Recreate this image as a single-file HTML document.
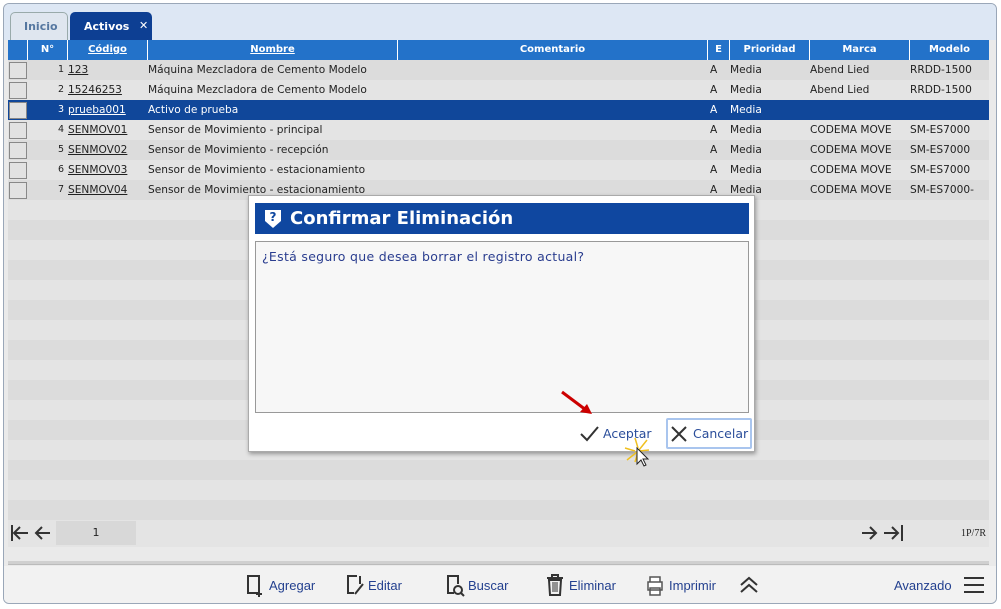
<!DOCTYPE html>
<html><head><meta charset="utf-8"><style>
*{box-sizing:border-box;margin:0;padding:0}
body{width:1001px;height:609px;background:#fff;font-family:"DejaVu Sans",Verdana,sans-serif;font-size:10.6px;color:#222;position:relative;overflow:hidden}
.panel{position:absolute;left:3px;top:3px;width:994px;height:601px;border:1px solid #9aa7b8;border-radius:6px;background:#eaeaea;overflow:hidden}
.tabbar{position:absolute;left:0;top:0;width:100%;height:36px;background:#dde7f4}
.tab{position:absolute;top:8px;height:28px;border:1px solid #9aa;border-bottom:none;border-radius:5px 5px 0 0;font-weight:bold;font-size:11px;padding:7px 0 0 13px}
.abs{position:absolute}
.hdr{position:absolute;left:4px;top:36px;width:981px;height:20px;background:#2372c9;color:#fff;font-weight:bold;font-size:10px}
.hdr div{position:absolute;top:0;height:20px;line-height:20px;text-align:center;border-left:1px solid #fff}
.row{position:absolute;left:4px;width:981px;height:20px;line-height:20px}
.row span{position:absolute;top:0;white-space:nowrap}
.cb{position:absolute;left:1px;top:2px;width:18px;height:17px;border:1px solid #888;background:#e2e2e2}
u{text-decoration:underline}
.dlg{position:absolute;left:248px;top:195px;width:507px;height:257px;background:#fff;border:1px solid #aaa;box-shadow:1px 2px 4px rgba(0,0,0,.35)}
.tb{font-family:"Liberation Sans",sans-serif;font-size:13px;color:#23408f;position:absolute;top:578px}
</style></head><body>
<div class="panel">
<div class="tabbar"></div>
<div class="tab" style="left:6px;width:58px;background:#dfe6ef;color:#5577a0">Inicio</div>
<div class="tab" style="left:66px;width:82px;background:#0d3f93;color:#fff;border-color:#0d3f93">Activos<span style="position:absolute;left:68px;top:6px">✕</span></div>
<div class="hdr">
<div style="left:0;width:19px;border:none"></div>
<div style="left:19px;width:40px">N°</div>
<div style="left:59px;width:80px"><u>Código</u></div>
<div style="left:139px;width:250px"><u>Nombre</u></div>
<div style="left:389px;width:310px">Comentario</div>
<div style="left:699px;width:22px">E</div>
<div style="left:721px;width:80px">Prioridad</div>
<div style="left:801px;width:100px">Marca</div>
<div style="left:901px;width:80px">Modelo</div>
</div>
<div id="rows"></div>
<div class="abs" style="left:4px;top:516px;width:981px;height:27px;background:#e4e4e4"></div>
<div class="abs" style="left:52px;top:517px;width:80px;height:24px;background:#d8d8d8;text-align:center;line-height:24px;font-size:11px">1</div>
<svg class="abs" style="left:6px;top:519px" width="46" height="20" viewBox="0 0 46 20"><g stroke="#333" stroke-width="2" fill="none"><path d="M2 2v16M18 10H4M10 4l-6 6 6 6M40 10H26M32 4l-6 6 6 6"/></g></svg>
<svg class="abs" style="left:856px;top:519px" width="46" height="20" viewBox="0 0 46 20"><g stroke="#333" stroke-width="2" fill="none"><path d="M2 10h14M10 4l6 6-6 6M24 10h14M32 4l6 6-6 6M42 2v16"/></g></svg>
<div class="abs" style="left:957px;top:524px;font-family:'Liberation Serif',serif;font-size:10px">1P/7R</div>
<div class="abs" style="left:4px;top:557px;width:981px;height:4px;background:#d0d0d0;border-bottom:1px solid #bbb"></div>
<div class="abs" style="left:0;top:562px;width:994px;height:40px;background:#f2f2f2"></div>
</div>
<svg class="abs" style="left:245px;top:574px" width="20" height="24"><path d="M3 2h11v17H3z" fill="none" stroke="#333" stroke-width="2"/><path d="M14 17v6M11 20h6" stroke="#333" stroke-width="2"/></svg>
<span class="tb" style="left:269px">Agregar</span>
<svg class="abs" style="left:345px;top:574px" width="20" height="24"><path d="M12 2H3v17h6M15 2v8" fill="none" stroke="#333" stroke-width="2"/><path d="M10 20l8-10" stroke="#333" stroke-width="2"/></svg>
<span class="tb" style="left:368px">Editar</span>
<svg class="abs" style="left:445px;top:574px" width="22" height="24"><path d="M9 19H3V2h10v8" fill="none" stroke="#333" stroke-width="2"/><circle cx="13" cy="16" r="4" fill="none" stroke="#333" stroke-width="2"/><path d="M16 19l3 3" stroke="#333" stroke-width="2"/></svg>
<span class="tb" style="left:468px">Buscar</span>
<svg class="abs" style="left:545px;top:573px" width="20" height="24"><path d="M2 5h16M7 5V2h6v3M4 7h12l-1 15H5z" fill="none" stroke="#333" stroke-width="2"/><path d="M8 9v10M10 9v10M12 9v10" stroke="#333"/></svg>
<span class="tb" style="left:569px">Eliminar</span>
<svg class="abs" style="left:645px;top:575px" width="20" height="22"><path d="M5 7V2h10v5M3 7h14v8H3zM5 13h10v7H5z" fill="#fff" stroke="#555" stroke-width="1.5"/></svg>
<span class="tb" style="left:669px">Imprimir</span>
<svg class="abs" style="left:738px;top:576px" width="22" height="18"><path d="M3 9l8-7 8 7M3 16l8-7 8 7" fill="none" stroke="#333" stroke-width="2"/></svg>
<span class="tb" style="left:894px">Avanzado</span>
<svg class="abs" style="left:963px;top:576px" width="22" height="18"><path d="M1 2h20M1 9h20M1 16h20" stroke="#333" stroke-width="2"/></svg>

<div class="dlg">
<div class="abs" style="left:6px;top:7px;width:494px;height:31px;background:#0f47a0;color:#fff;font-weight:bold;font-size:18px;line-height:31px;padding-left:35px">Confirmar Eliminación</div>
<svg class="abs" style="left:15px;top:12px" width="18" height="21"><path d="M1 2h16v11l-8 7-8-7z" fill="#fff"/><text x="9" y="13" fill="#0f47a0" font-size="12" font-weight="bold" text-anchor="middle" font-family="DejaVu Sans">?</text></svg>
<div class="abs" style="left:6px;top:45px;width:494px;height:172px;background:#f7f7f7;border:1px solid #999;color:#2a3d8f;font-size:12.5px;padding:7px 0 0 6px;letter-spacing:.3px">¿Está seguro que desea borrar el registro actual?</div>
<svg class="abs" style="left:331px;top:230px" width="20" height="16"><path d="M1 8l6 6L18 1" fill="none" stroke="#333" stroke-width="2"/></svg>
<span class="abs" style="left:354px;top:230px;color:#2a4d9a;font-size:12.5px">Aceptar</span>
<div class="abs" style="left:417px;top:222px;width:86px;height:31px;border:2px solid #a9c5ee;border-radius:2px"></div>
<svg class="abs" style="left:421px;top:229px" width="18" height="18"><path d="M2 2l14 14M16 2L2 16" stroke="#333" stroke-width="2"/></svg>
<span class="abs" style="left:444px;top:230px;color:#2a4d9a;font-size:12.5px">Cancelar</span>
<svg class="abs" style="left:310px;top:193px" width="50" height="30"><path d="M3 3l24 18" stroke="#c00" stroke-width="3"/><path d="M33 25l-12-2 7-8z" fill="#c00"/></svg>
<svg class="abs" style="left:372px;top:238px" width="40" height="40"><g stroke="#f0c020" stroke-width="1.5"><path d="M14 4l3 10M4 14l10 3M26 6l-8 10M6 26l10-8M28 16l-10 1M14 28l3-10"/></g><path d="M16 14v16l4-4 3 6 2-1-3-6h5z" fill="#fff" stroke="#222"/></svg>
</div>
<script>
var d=[["1","123","Máquina Mezcladora de Cemento Modelo","Abend Lied","RRDD-1500"],["2","15246253","Máquina Mezcladora de Cemento Modelo","Abend Lied","RRDD-1500"],["3","prueba001","Activo de prueba","",""],["4","SENMOV01","Sensor de Movimiento - principal","CODEMA MOVE","SM-ES7000"],["5","SENMOV02","Sensor de Movimiento - recepción","CODEMA MOVE","SM-ES7000"],["6","SENMOV03","Sensor de Movimiento - estacionamiento","CODEMA MOVE","SM-ES7000"],["7","SENMOV04","Sensor de Movimiento - estacionamiento","CODEMA MOVE","SM-ES7000-"]];
var h="";
for(var i=0;i<23;i++){var t=56+i*20;var bg=i%2?"#e4e4e4":"#dcdcdc";var c="#222";if(i==2){bg="#10479a";c="#fff";}
h+='<div class="row" style="top:'+t+'px;background:'+bg+';color:'+c+'">';
if(i<7){var r=d[i];h+='<div class="cb"></div><span style="right:925px;font-size:9.5px">'+r[0]+'</span><span style="left:60px"><u>'+r[1]+'</u></span><span style="left:140px">'+r[2]+'</span><span style="left:702px">A</span><span style="left:722px">Media</span><span style="left:802px">'+r[3]+'</span><span style="left:902px">'+r[4]+'</span>';}
h+='</div>';}
document.getElementById("rows").innerHTML=h;
</script>
</body></html>
